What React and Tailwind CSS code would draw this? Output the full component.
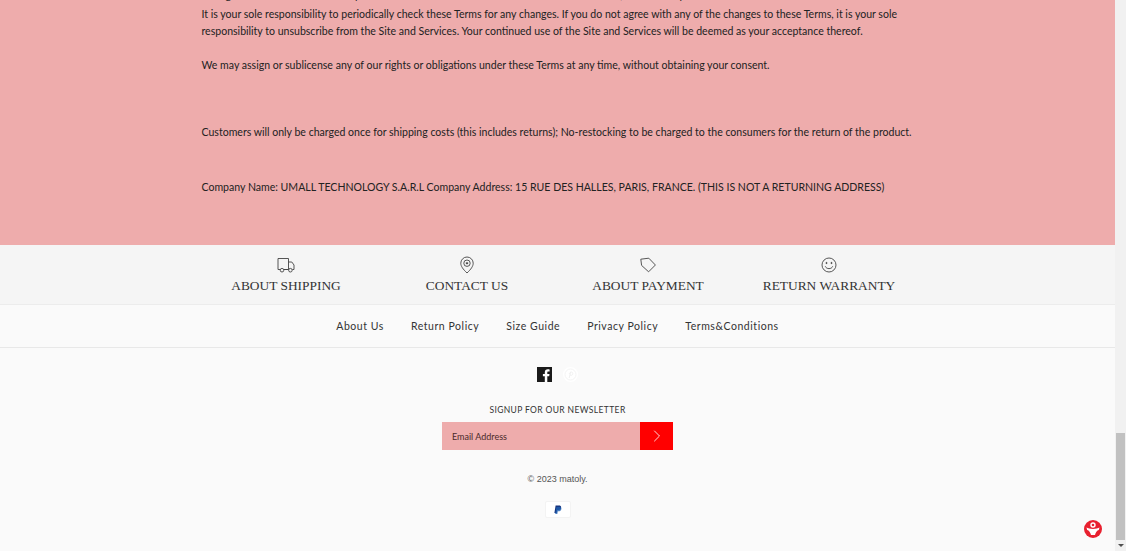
import { ChevronRight } from 'lucide-react';

const features = [
  { label: 'ABOUT SHIPPING', icon: 'truck' },
  { label: 'CONTACT US', icon: 'pin' },
  { label: 'ABOUT PAYMENT', icon: 'tag' },
  { label: 'RETURN WARRANTY', icon: 'smile' },
];

const links = ['About Us', 'Return Policy', 'Size Guide', 'Privacy Policy', 'Terms&Conditions'];

function FeatureIcon({ name }) {
  const props = {
    width: 18,
    height: 18,
    viewBox: '0 0 18 18',
    fill: 'none',
    stroke: '#444',
    strokeWidth: 0.9,
  };
  if (name === 'truck') {
    return (
      <svg {...props}>
        <path d="M3 13.5H1V2.5H11.5V13.5H7" />
        <path d="M11.5 6H14.8L17 9V13.5H15.4" />
        <path d="M7 13.5H11.5" />
        <circle cx="5" cy="14.2" r="1.8" />
        <circle cx="13.4" cy="14.2" r="1.8" />
      </svg>
    );
  }
  if (name === 'pin') {
    return (
      <svg {...props}>
        <path d="M9 17C5 13.2 2.8 10.2 2.8 7.2A6.2 6.2 0 0 1 15.2 7.2C15.2 10.2 13 13.2 9 17Z" />
        <circle cx="9" cy="7.2" r="3.2" />
        <path d="M9 8.6L7.8 7.4A.8.8 0 0 1 9 6.4A.8.8 0 0 1 10.2 7.4Z" fill="#444" stroke="none" />
      </svg>
    );
  }
  if (name === 'tag') {
    return (
      <svg {...props}>
        <path d="M1.8 3.2L9.8 2.2L16.4 9L9.6 15.8L2.6 9.4Z" />
      </svg>
    );
  }
  return (
    <svg {...props}>
      <circle cx="9" cy="9" r="7" />
      <circle cx="6.5" cy="7" r="0.6" fill="#444" />
      <circle cx="11.5" cy="7" r="0.6" fill="#444" />
      <path d="M5.3 10.3C6.3 13.4 11.7 13.4 12.7 10.3" />
    </svg>
  );
}

function Scrollbar() {
  return (
    <div className="w-[11px] h-full bg-[#f1f1f1] flex flex-col shrink-0">
      <div className="h-[433px]" />
      <div className="h-[107px] mx-px bg-[#c1c1c1]" />
      <div className="flex-1 flex items-center justify-center">
        <div className="w-0 h-0 border-x-[3px] border-x-transparent border-t-[3px] border-t-[#505050]" />
      </div>
    </div>
  );
}

export default function App() {
  return (
    <div className="relative w-[1126px] h-[551px] overflow-hidden flex font-['Lato',sans-serif] text-[#222]">
      <div className="flex-1 min-w-0 flex flex-col bg-[#fafafa]">
        <section className="h-[245px] shrink-0 overflow-hidden bg-[#eeacac] text-[10.55px] leading-[17px]">
          <div className="w-[724px] mx-auto pl-[6px] pr-[4.5px] -mt-[13px]">
            <p className="whitespace-nowrap">
              Changes to these Terms will take place at our sole discretion and without notice in advance, and we will post them here.
            </p>
            <p className="mt-[2px]">
              It is your sole responsibility to periodically check these Terms for any changes. If you do not agree with any of the changes to these Terms, it is your sole responsibility to unsubscribe from the Site and Services. Your continued use of the Site and Services will be deemed as your acceptance thereof.
            </p>
            <p className="mt-[17px]">
              We may assign or sublicense any of our rights or obligations under these Terms at any time, without obtaining your consent.
            </p>
            <p className="mt-[50px] whitespace-nowrap">
              Customers will only be charged once for shipping costs (this includes returns); No-restocking to be charged to the consumers for the return of the product.
            </p>
            <p className="mt-[38px] whitespace-nowrap">
              Company Name: UMALL TECHNOLOGY S.A.R.L Company Address: 15 RUE DES HALLES, PARIS, FRANCE. (THIS IS NOT A RETURNING ADDRESS)
            </p>
          </div>
        </section>

        <section className="h-[60px] shrink-0 bg-[#f5f5f5] border-b border-[#ececec]">
          <div className="w-[724px] mx-auto grid grid-cols-4">
            {features.map((f) => (
              <div key={f.label} className="flex flex-col items-center pt-[11px]">
                <FeatureIcon name={f.icon} />
                <span className="mt-[3px] text-[13.4px] leading-[17px] text-[#333] font-['Liberation_Serif',serif]">
                  {f.label}
                </span>
              </div>
            ))}
          </div>
        </section>

        <nav className="h-[43px] shrink-0 pt-px flex items-center justify-center gap-[27px] border-b border-[#e8e8e8] text-[10.5px] tracking-[0.55px] text-[#333]">
          {links.map((link) => (
            <a key={link}>{link}</a>
          ))}
        </nav>

        <footer className="flex-1 flex flex-col items-center">
          <div className="mt-[19px] flex items-center gap-[11px]">
            <div className="w-[15px] h-[15px] bg-[#1a1a1a] overflow-hidden">
              <svg width="15" height="15" viewBox="0 0 15 15" fill="#fff">
                <path d="M10.3 15V9.3H12.2L12.5 7H10.3V5.6C10.3 4.9 10.5 4.5 11.4 4.5H12.6V2.4C12.4 2.4 11.7 2.3 10.8 2.3C9 2.3 7.8 3.4 7.8 5.4V7H5.9V9.3H7.8V15Z" />
              </svg>
            </div>
            <svg width="15" height="15" viewBox="0 0 15 15">
              <circle cx="7.5" cy="7.5" r="7.5" fill="#fff" />
              <circle cx="7.5" cy="7.5" r="5.5" fill="none" stroke="#f4f4f4" strokeWidth="1" />
              <path d="M6.2 11L7.6 5M6.4 7C6 5 9.6 4.2 9.8 6.4C10 8.4 7.6 9 7 7.6" fill="none" stroke="#eeeeee" strokeWidth="0.9" />
            </svg>
          </div>
          <p className="mt-[22px] text-[8.5px] leading-[12px] tracking-[0.37px] text-[#333]">SIGNUP FOR OUR NEWSLETTER</p>
          <form className="mt-[6px] flex w-[231px] h-[28px]">
            <div className="flex-1 bg-[#eeacac] pl-[10px] pt-px flex items-center text-[9px] text-[#4a2a2a]">Email Address</div>
            <button type="button" className="w-[33px] bg-[#ff0000] flex items-center justify-center">
              <ChevronRight size={20} strokeWidth={1} color="#fff" />
            </button>
          </form>
          <p className="mt-[23px] text-[9px] leading-[12px] text-[#555] font-['Liberation_Sans',sans-serif]">© 2023 matoly.</p>
          <div className="mt-[16px] w-[26px] h-[17px] bg-white border border-[#f3f3f3] rounded-[2px] flex items-center justify-center">
            <svg width="8" height="10" viewBox="0 0 8 9">
              <path d="M1.6 0H5C6.6 0 7.4 .9 7.1 2.3C6.8 3.8 5.7 4.6 4.2 4.6H3.2L2.7 7.4H.4Z" fill="#17357f" />
              <path d="M2.4 1.6H5.4C6.8 1.6 7.6 2.3 7.4 3.5C7.1 5 6 5.8 4.6 5.8H3.8L3.3 8.6H1.2Z" fill="#1f5fb0" opacity="0.8" />
            </svg>
          </div>
        </footer>
      </div>
      <Scrollbar />
      <svg className="absolute left-[1084px] top-[520px]" width="18" height="18" viewBox="0 0 18 18">
        <circle cx="9" cy="9" r="9" fill="#e8202f" />
        <circle cx="9" cy="5" r="2" fill="none" stroke="#fff" strokeWidth="1.4" />
        <path d="M2.5 7.6C5 9.4 13 9.4 15.5 7.6L14.8 10C13 10.4 11.6 12.4 11 15H7C6.4 12.4 5 10.4 3.2 10Z" fill="#fff" />
      </svg>
    </div>
  );
}
